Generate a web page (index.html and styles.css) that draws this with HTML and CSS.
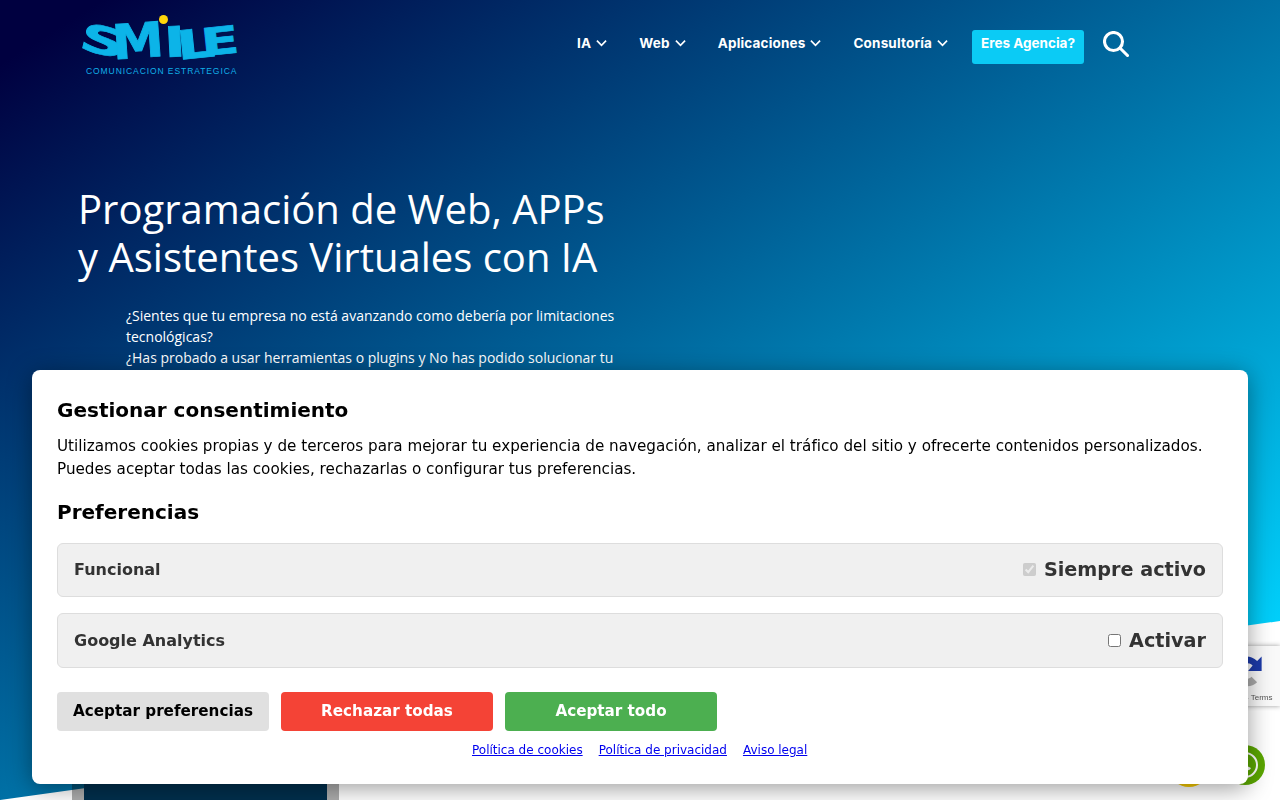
FILE: index.html
```html
<!DOCTYPE html>
<html lang="es">
<head>
    <meta charset="UTF-8">
    <meta name="viewport" content="width=device-width, initial-scale=1.0">
    <title>Smile Comunicación Estratégica</title>
    <link rel="stylesheet" href="styles.css">
</head>
<body>
    <div class="hero">
        <header class="site-header">
            <a href="#" class="logo">
                <span class="logo-word">
                    <span class="l-s">S</span><span class="l-m">M</span><span class="l-i">I</span><span class="l-l">L</span><span class="l-e">E</span>
                    <span class="logo-dot"></span>
                </span>
                <span class="logo-tag">COMUNICACION ESTRATEGICA</span>
            </a>
            <nav class="main-nav">
                <a href="#" class="nav-link">IA <svg class="chev" viewBox="0 0 12 8"><path d="M1 1.5l5 5 5-5"/></svg></a>
                <a href="#" class="nav-link">Web <svg class="chev" viewBox="0 0 12 8"><path d="M1 1.5l5 5 5-5"/></svg></a>
                <a href="#" class="nav-link">Aplicaciones <svg class="chev" viewBox="0 0 12 8"><path d="M1 1.5l5 5 5-5"/></svg></a>
                <a href="#" class="nav-link">Consultoría <svg class="chev" viewBox="0 0 12 8"><path d="M1 1.5l5 5 5-5"/></svg></a>
                <a href="#" class="agency-btn">Eres Agencia?</a>
                <a href="#" class="search-btn">
                    <svg viewBox="0 0 26 26"><circle cx="10.5" cy="10.500" r="9"/><path d="M17 17l7.500 7.500"/></svg>
                </a>
            </nav>
        </header>

        <section class="hero-body">
            <h1>Programación de Web, APPs<br>y Asistentes Virtuales con IA</h1>
            <div class="hero-text">
                <p>¿Sientes que tu empresa no está avanzando como debería por limitaciones tecnológicas?</p>
                <p>¿Has probado a usar herramientas o plugins y No has podido solucionar tu problema?</p>
            </div>
            <div class="hero-card"></div>
        </section>
    </div>

    <!-- floating widgets -->
    <div class="recaptcha">
        <svg class="recaptcha-logo" viewBox="0 0 32 32">
            <path class="rc-blue" d="M29 16V3l-4 4A13 13 0 0 0 5 9l5 4a7 7 0 0 1 11-2l-4 5z"/>
            <path class="rc-gray" d="M3 16v13l4-4c5 6 13 6 18 1l-5-5c-3 3-7 2-9-1l4-4z"/>
        </svg>
        <span class="recaptcha-links">Privacy - Terms</span>
    </div>
    <div class="float-btn float-yellow"></div>
    <div class="float-btn float-green">
        <svg viewBox="0 0 40 40">
            <path class="wa-ring" d="M20 8a12 12 0 0 1 0 24 12 12 0 0 1-6-1.600L8.500 32l1.600-5.500A12 12 0 0 1 20 8z"/>
            <path class="wa-phone" d="M15.500 14c-1.500 1-1.500 3 0 5.500s4 4.800 6.500 5.500c2 .5 3.500-.5 4-2l-3-1.500-1.300 1.200c-1.700-.7-3.200-2.200-4-4l1.200-1.300-1.400-3.200z"/>
        </svg>
    </div>

    <!-- cookie banner -->
    <div class="cookie-modal">
        <h3>Gestionar consentimiento</h3>
        <p class="cookie-intro">Utilizamos cookies propias y de terceros para mejorar tu experiencia de navegación, analizar el tráfico del sitio y ofrecerte contenidos personalizados. Puedes aceptar todas las cookies, rechazarlas o configurar tus preferencias.</p>
        <h4>Preferencias</h4>
        <div class="pref-row">
            <span class="pref-name">Funcional</span>
            <label class="pref-state"><input type="checkbox" checked disabled> Siempre activo</label>
        </div>
        <div class="pref-row">
            <span class="pref-name">Google Analytics</span>
            <label class="pref-state"><input type="checkbox"> Activar</label>
        </div>
        <div class="cookie-buttons">
            <button class="btn btn-prefs">Aceptar preferencias</button>
            <button class="btn btn-reject">Rechazar todas</button>
            <button class="btn btn-accept">Aceptar todo</button>
        </div>
        <div class="cookie-links">
            <a href="#">Política de cookies</a>
            <a href="#">Política de privacidad</a>
            <a href="#">Aviso legal</a>
        </div>
    </div>
</body>
</html>
```

FILE: styles.css
```css
* {
    margin: 0;
    padding: 0;
    box-sizing: border-box;
}

html, body {
    height: 800px;
    overflow: hidden;
}

body {
    font-family: "DejaVu Sans", sans-serif;
    background: #fff;
    color: #000;
}

.hero {
    position: relative;
    height: 800px;
}

.hero::before {
    content: "";
    position: absolute;
    inset: 0;
    background: linear-gradient(to bottom right, #000040 4%, #00d4ff 91%);
    clip-path: polygon(0 0, 100% 0, 100% 621px, 0 800px);
}

/* header */
.site-header {
    position: relative;
    display: flex;
    justify-content: space-between;
    padding: 14px 151px 0 82px;
}

.logo {
    display: block;
    width: 158px;
    text-decoration: none;
}

.logo-word {
    position: relative;
    display: flex;
    height: 48px;
    font-weight: 700;
    font-size: 40px;
    line-height: 48px;
    color: #0cb4e8;
    -webkit-text-stroke: 0.7px #0cb4e8;
}

.logo-word span {
    display: block;
    flex: none;
    text-align: center;
}

.l-s { width: 44px; margin-left: -1px; transform: translateY(3px) rotate(14deg) scale(1.6, 0.95); }
.l-m { width: 50px; margin-left: -12px; transform: translateY(3px) rotate(-4deg) scale(1.3, 1.2); }
.l-i { width: 13px; margin-left: 4px; transform: translateY(4px) rotate(-3deg) scale(1.45, 1.05); }
.l-l { width: 35px; margin-left: -2px; transform: translateY(6px) rotate(-6deg) scale(1.5, 1); }
.l-e { width: 34px; margin-left: -10px; transform: translateY(3px) rotate(-6deg) scale(1.4, 0.95); }

.logo-word .logo-dot {
    position: absolute;
    left: 77px;
    top: 1px;
    width: 9px;
    height: 9px;
    border-radius: 50%;
    background: #ffd60a;
    -webkit-text-stroke: 0;
}

.logo-tag {
    display: block;
    margin: 4px 0 0 4px;
    font-family: "Liberation Sans", sans-serif;
    font-size: 8.5px;
    line-height: 10px;
    letter-spacing: 0.92px;
    color: #10b0e8;
    white-space: nowrap;
}

.main-nav {
    display: flex;
    align-items: center;
    height: 58px;
    font-family: Inter, sans-serif;
    font-weight: 700;
    font-size: 13.5px;
}

.nav-link {
    display: flex;
    align-items: center;
    gap: 5px;
    margin-right: 32px;
    color: #fff;
    text-decoration: none;
    letter-spacing: 0.17px;
    white-space: nowrap;
}

.nav-link:nth-child(4) {
    margin-right: 24px;
}

.chev {
    width: 11px;
    height: 8px;
    fill: none;
    stroke: #fff;
    stroke-width: 1.8;
}

.agency-btn {
    display: block;
    align-self: flex-start;
    width: 112px;
    height: 34px;
    margin-top: 16px;
    line-height: 27px;
    text-align: center;
    background: #0bcbf5;
    border-radius: 3px;
    color: #fff;
    text-decoration: none;
    white-space: nowrap;
}

.search-btn {
    display: block;
    width: 26px;
    height: 26px;
    margin: 2px 0 0 19px;
}

.search-btn svg {
    display: block;
    width: 26px;
    height: 26px;
    fill: none;
    stroke: #fff;
    stroke-width: 3.1;
    stroke-linecap: round;
}

/* hero content */
.hero-body {
    position: relative;
    padding: 109px 0 0 78px;
    color: #fff;
    font-family: "Open Sans", sans-serif;
}

.hero-body h1 {
    font-weight: 400;
    font-size: 40px;
    line-height: 48px;
}

.hero-text {
    width: 496px;
    margin: 24px 0 0 48px;
    font-size: 14px;
    line-height: 21px;
}

.hero-card {
    width: 243px;
    height: 151px;
    margin: 260px 0 0 6px;
    background: #002f4d;
    box-shadow: 0 0 0 12px rgba(0, 0, 0, 0.32);
}

/* floating */
.recaptcha {
    position: fixed;
    left: 1210px;
    top: 646px;
    width: 70px;
    height: 60px;
    background: #f9f9f9;
    box-shadow: 0 0 5px rgba(0, 0, 0, 0.4);
}

.recaptcha-logo {
    position: absolute;
    left: 19px;
    top: 3px;
    width: 36px;
    height: 44px;
}

.rc-blue { fill: #1c3aa9; }
.rc-gray { fill: #ababab; }

.recaptcha-links {
    position: absolute;
    left: 0;
    top: 46px;
    width: 70px;
    font-family: "Liberation Sans", sans-serif;
    font-size: 8px;
    line-height: 11px;
    text-align: center;
    color: #555;
    white-space: nowrap;
}

.float-btn {
    position: fixed;
    width: 40px;
    height: 40px;
    border-radius: 50%;
}

.float-yellow {
    left: 1169px;
    top: 747px;
    background: #f7cb00;
}

.float-green {
    left: 1225px;
    top: 745px;
    background: #5ba700;
}

.float-green svg {
    display: block;
    width: 40px;
    height: 40px;
}

.wa-ring {
    fill: none;
    stroke: #fff;
    stroke-width: 2;
}

.wa-phone { fill: #fff; }

/* cookie modal */
.cookie-modal {
    position: fixed;
    left: 32px;
    right: 32px;
    top: 370px;
    bottom: 16px;
    padding: 25px;
    background: #fff;
    border-radius: 8px;
    box-shadow: 0 4px 24px rgba(0, 0, 0, 0.4);
}

.cookie-modal h3 {
    font-size: 20px;
    line-height: 30px;
}

.cookie-intro {
    margin-top: 10px;
    font-size: 15.2px;
    line-height: 23px;
}

.cookie-modal h4 {
    margin-top: 16px;
    font-size: 20px;
    line-height: 30px;
}

.pref-row {
    display: flex;
    justify-content: space-between;
    align-items: center;
    height: 54px;
    margin-top: 16px;
    padding: 0 16px 1px;
    background: #f0f0f0;
    border: 1px solid #ddd;
    border-radius: 6px;
    color: #333;
    font-weight: 700;
}

.pref-row + .pref-row {
    height: 55px;
}

.pref-name {
    font-size: 16px;
}

.pref-state {
    font-size: 19.2px;
}

.pref-state input {
    margin: 0 1px 0 0;
}

.cookie-buttons {
    display: flex;
    gap: 12px;
    margin-top: 24px;
}

.btn {
    width: 212px;
    height: 39px;
    padding-bottom: 2px;
    border: none;
    border-radius: 4px;
    font-family: inherit;
    font-weight: 700;
    font-size: 15.2px;
}

.btn-prefs { background: #e0e0e0; color: #000; }
.btn-reject { background: #f44336; color: #fff; }
.btn-accept { background: #4caf50; color: #fff; }

.cookie-links {
    display: flex;
    gap: 16px;
    margin-top: 11px;
    padding-left: 415px;
    font-size: 12px;
    line-height: 16px;
}

.cookie-links a {
    color: #0000ee;
}
```
